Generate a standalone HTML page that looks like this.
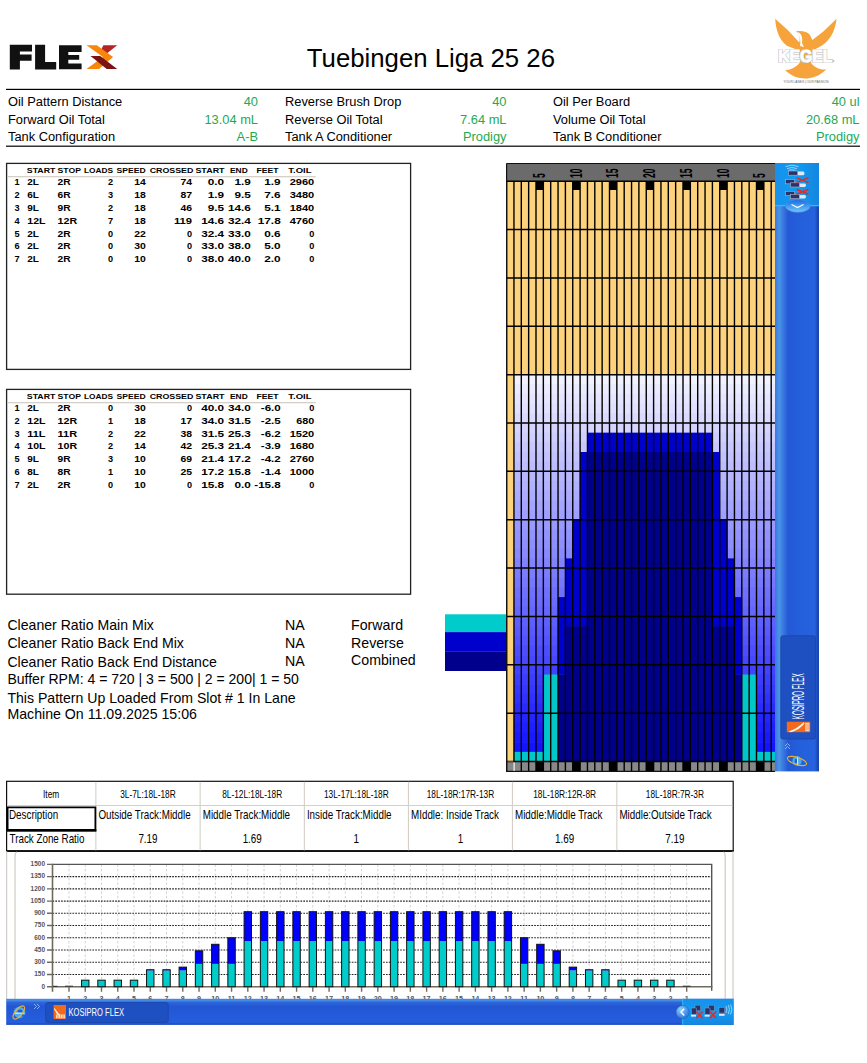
<!DOCTYPE html><html><head><meta charset="utf-8"><title>Kegel Flex Pattern</title><style>html,body{margin:0;padding:0;background:#fff;overflow:hidden}svg{display:block;font-family:"Liberation Sans",sans-serif}</style></head><body>
<svg width="867" height="1063" viewBox="0 0 867 1063">
<g fill="#111">
<path d="M9.8 44.8H32V51.4H19.9V54.5H31.6V60.8H19.9V69.4H9.8Z"/>
<path d="M35.1 44.8H45.1V62.1H56.2V69.4H35.1Z"/>
<path d="M59 45.2H81.6V52.1H68.3V54.9H79.2V59.8H68.3V63.4H81.6V69.3H59Z"/>
</g>
<path d="M103.4 45.2H117.2L107.5 53H99.5Z" fill="#B52424"/>
<path d="M86.5 45.2H96.8L113.1 57L99 69.1H86.5L103 57Z" fill="#F7860C"/>
<path d="M90.5 56.1H100.2L117.2 69.1H106.7Z" fill="#7A1414"/>
<text x="306.80" y="67.00" font-size="26.6" textLength="248.20" lengthAdjust="spacingAndGlyphs" >Tuebingen Liga 25 26</text>
<path fill="#F5A33A" d="M775.2 18.8 C775.6 29.6 779.5 40.8 787.3 46.0 L798.5 50.3 L800.3 62.0 C796.0 67.6 789.9 70.2 785.1 70.2 C791.6 76.3 798.5 78.4 805.0 78.4 C811.5 78.4 819.3 76.3 826.2 69.4 C821.0 70.2 813.3 67.6 810.7 62.0 L812.4 50.3 C823.6 46.0 834.0 39.1 836.6 18.8 L823.6 31.3 L812.4 40.0 L809.8 34.8 C807.2 31.3 801.1 30.4 796.0 31.3 C799.4 33.9 800.3 36.5 799.4 42.5 L788.2 30.4 Z"/>
<path fill="#fff" d="M797.5 32C801 33 803 37 802 43L804 47L800 46C801 41 800 36 797.5 32Z"/>
<text x="805.30" y="62.00" font-size="16.5" text-anchor="middle" font-weight="bold" fill="#fff" textLength="54.00" lengthAdjust="spacingAndGlyphs" stroke="#c4c4c4" stroke-width="2.2">KEGEL</text>
<text x="805.30" y="62.00" font-size="16.5" text-anchor="middle" font-weight="bold" fill="#fff" textLength="54.00" lengthAdjust="spacingAndGlyphs" stroke="#fff" stroke-width="0.9">KEGEL</text>
<circle cx="833.5" cy="61" r="1" fill="#bbb"/>
<text x="806.00" y="82.80" font-size="3.6" text-anchor="middle" fill="#666" textLength="45.00" lengthAdjust="spacingAndGlyphs" >YOUR LANES | OUR PASSION</text>
<rect x="6" y="88.8" width="854" height="1.2" fill="#000"/>
<rect x="6" y="145.6" width="854" height="1.2" fill="#000"/>
<text x="8.00" y="105.70" font-size="12.85" >Oil Pattern Distance</text>
<text x="258.00" y="105.70" font-size="12.85" text-anchor="end" fill="#1DAA55" >40</text>
<text x="285.00" y="105.70" font-size="12.85" >Reverse Brush Drop</text>
<text x="506.50" y="105.70" font-size="12.85" text-anchor="end" fill="#1DAA55" >40</text>
<text x="553.00" y="105.70" font-size="12.85" >Oil Per Board</text>
<text x="859.50" y="105.70" font-size="12.85" text-anchor="end" fill="#1DAA55" >40 ul</text>
<text x="8.00" y="123.50" font-size="12.85" >Forward Oil Total</text>
<text x="258.00" y="123.50" font-size="12.85" text-anchor="end" fill="#1DAA55" >13.04 mL</text>
<text x="285.00" y="123.50" font-size="12.85" >Reverse Oil Total</text>
<text x="506.50" y="123.50" font-size="12.85" text-anchor="end" fill="#1DAA55" >7.64 mL</text>
<text x="553.00" y="123.50" font-size="12.85" >Volume Oil Total</text>
<text x="859.50" y="123.50" font-size="12.85" text-anchor="end" fill="#1DAA55" >20.68 mL</text>
<text x="8.00" y="141.30" font-size="12.85" >Tank Configuration</text>
<text x="258.00" y="141.30" font-size="12.85" text-anchor="end" fill="#1DAA55" >A-B</text>
<text x="285.00" y="141.30" font-size="12.85" >Tank A Conditioner</text>
<text x="506.50" y="141.30" font-size="12.85" text-anchor="end" fill="#1DAA55" >Prodigy</text>
<text x="553.00" y="141.30" font-size="12.85" >Tank B Conditioner</text>
<text x="859.50" y="141.30" font-size="12.85" text-anchor="end" fill="#1DAA55" >Prodigy</text>
<rect x="6.6" y="163.4" width="404" height="206.0" fill="#fff" stroke="#222" stroke-width="1.3"/>
<rect x="7.3" y="176.0" width="308.5" height="1.3" fill="#D4D0C8"/>
<text x="26.80" y="172.90" font-size="6.6" font-weight="bold" textLength="28.60" lengthAdjust="spacingAndGlyphs" >START</text>
<text x="57.60" y="172.90" font-size="6.6" font-weight="bold" textLength="23.40" lengthAdjust="spacingAndGlyphs" >STOP</text>
<text x="84.00" y="172.90" font-size="6.6" font-weight="bold" textLength="29.00" lengthAdjust="spacingAndGlyphs" >LOADS</text>
<text x="116.60" y="172.90" font-size="6.6" font-weight="bold" textLength="29.20" lengthAdjust="spacingAndGlyphs" >SPEED</text>
<text x="149.70" y="172.90" font-size="6.6" font-weight="bold" textLength="43.70" lengthAdjust="spacingAndGlyphs" >CROSSED</text>
<text x="195.40" y="172.90" font-size="6.6" font-weight="bold" textLength="29.20" lengthAdjust="spacingAndGlyphs" >START</text>
<text x="230.00" y="172.90" font-size="6.6" font-weight="bold" textLength="17.70" lengthAdjust="spacingAndGlyphs" >END</text>
<text x="256.60" y="172.90" font-size="6.6" font-weight="bold" textLength="22.00" lengthAdjust="spacingAndGlyphs" >FEET</text>
<text x="288.30" y="172.90" font-size="6.6" font-weight="bold" textLength="23.20" lengthAdjust="spacingAndGlyphs" >T.OIL</text>
<text x="14.40" y="185.20" font-size="8.4" font-weight="bold" textLength="5.10" lengthAdjust="spacingAndGlyphs" >1</text>
<text x="27.30" y="185.20" font-size="8.4" font-weight="bold" textLength="11.70" lengthAdjust="spacingAndGlyphs" >2L</text>
<text x="57.60" y="185.20" font-size="8.4" font-weight="bold" textLength="13.10" lengthAdjust="spacingAndGlyphs" >2R</text>
<text x="113.00" y="185.20" font-size="8.4" text-anchor="end" font-weight="bold" textLength="5.10" lengthAdjust="spacingAndGlyphs" >2</text>
<text x="145.80" y="185.20" font-size="8.4" text-anchor="end" font-weight="bold" textLength="11.60" lengthAdjust="spacingAndGlyphs" >14</text>
<text x="192.10" y="185.20" font-size="8.4" text-anchor="end" font-weight="bold" textLength="11.60" lengthAdjust="spacingAndGlyphs" >74</text>
<text x="224.10" y="185.20" font-size="8.4" text-anchor="end" font-weight="bold" textLength="16.40" lengthAdjust="spacingAndGlyphs" >0.0</text>
<text x="250.80" y="185.20" font-size="8.4" text-anchor="end" font-weight="bold" textLength="16.40" lengthAdjust="spacingAndGlyphs" >1.9</text>
<text x="280.70" y="185.20" font-size="8.4" text-anchor="end" font-weight="bold" textLength="16.40" lengthAdjust="spacingAndGlyphs" >1.9</text>
<text x="314.30" y="185.20" font-size="8.4" text-anchor="end" font-weight="bold" textLength="24.60" lengthAdjust="spacingAndGlyphs" >2960</text>
<text x="14.40" y="198.05" font-size="8.4" font-weight="bold" textLength="5.10" lengthAdjust="spacingAndGlyphs" >2</text>
<text x="27.30" y="198.05" font-size="8.4" font-weight="bold" textLength="11.70" lengthAdjust="spacingAndGlyphs" >6L</text>
<text x="57.60" y="198.05" font-size="8.4" font-weight="bold" textLength="13.10" lengthAdjust="spacingAndGlyphs" >6R</text>
<text x="113.00" y="198.05" font-size="8.4" text-anchor="end" font-weight="bold" textLength="5.10" lengthAdjust="spacingAndGlyphs" >3</text>
<text x="145.80" y="198.05" font-size="8.4" text-anchor="end" font-weight="bold" textLength="11.60" lengthAdjust="spacingAndGlyphs" >18</text>
<text x="192.10" y="198.05" font-size="8.4" text-anchor="end" font-weight="bold" textLength="11.60" lengthAdjust="spacingAndGlyphs" >87</text>
<text x="224.10" y="198.05" font-size="8.4" text-anchor="end" font-weight="bold" textLength="16.40" lengthAdjust="spacingAndGlyphs" >1.9</text>
<text x="250.80" y="198.05" font-size="8.4" text-anchor="end" font-weight="bold" textLength="16.40" lengthAdjust="spacingAndGlyphs" >9.5</text>
<text x="280.70" y="198.05" font-size="8.4" text-anchor="end" font-weight="bold" textLength="16.40" lengthAdjust="spacingAndGlyphs" >7.6</text>
<text x="314.30" y="198.05" font-size="8.4" text-anchor="end" font-weight="bold" textLength="24.60" lengthAdjust="spacingAndGlyphs" >3480</text>
<text x="14.40" y="210.90" font-size="8.4" font-weight="bold" textLength="5.10" lengthAdjust="spacingAndGlyphs" >3</text>
<text x="27.30" y="210.90" font-size="8.4" font-weight="bold" textLength="11.70" lengthAdjust="spacingAndGlyphs" >9L</text>
<text x="57.60" y="210.90" font-size="8.4" font-weight="bold" textLength="13.10" lengthAdjust="spacingAndGlyphs" >9R</text>
<text x="113.00" y="210.90" font-size="8.4" text-anchor="end" font-weight="bold" textLength="5.10" lengthAdjust="spacingAndGlyphs" >2</text>
<text x="145.80" y="210.90" font-size="8.4" text-anchor="end" font-weight="bold" textLength="11.60" lengthAdjust="spacingAndGlyphs" >18</text>
<text x="192.10" y="210.90" font-size="8.4" text-anchor="end" font-weight="bold" textLength="11.60" lengthAdjust="spacingAndGlyphs" >46</text>
<text x="224.10" y="210.90" font-size="8.4" text-anchor="end" font-weight="bold" textLength="16.40" lengthAdjust="spacingAndGlyphs" >9.5</text>
<text x="250.80" y="210.90" font-size="8.4" text-anchor="end" font-weight="bold" textLength="22.90" lengthAdjust="spacingAndGlyphs" >14.6</text>
<text x="280.70" y="210.90" font-size="8.4" text-anchor="end" font-weight="bold" textLength="16.40" lengthAdjust="spacingAndGlyphs" >5.1</text>
<text x="314.30" y="210.90" font-size="8.4" text-anchor="end" font-weight="bold" textLength="24.60" lengthAdjust="spacingAndGlyphs" >1840</text>
<text x="14.40" y="223.75" font-size="8.4" font-weight="bold" textLength="5.10" lengthAdjust="spacingAndGlyphs" >4</text>
<text x="27.30" y="223.75" font-size="8.4" font-weight="bold" textLength="18.20" lengthAdjust="spacingAndGlyphs" >12L</text>
<text x="57.60" y="223.75" font-size="8.4" font-weight="bold" textLength="19.60" lengthAdjust="spacingAndGlyphs" >12R</text>
<text x="113.00" y="223.75" font-size="8.4" text-anchor="end" font-weight="bold" textLength="5.10" lengthAdjust="spacingAndGlyphs" >7</text>
<text x="145.80" y="223.75" font-size="8.4" text-anchor="end" font-weight="bold" textLength="11.60" lengthAdjust="spacingAndGlyphs" >18</text>
<text x="192.10" y="223.75" font-size="8.4" text-anchor="end" font-weight="bold" textLength="18.10" lengthAdjust="spacingAndGlyphs" >119</text>
<text x="224.10" y="223.75" font-size="8.4" text-anchor="end" font-weight="bold" textLength="22.90" lengthAdjust="spacingAndGlyphs" >14.6</text>
<text x="250.80" y="223.75" font-size="8.4" text-anchor="end" font-weight="bold" textLength="22.90" lengthAdjust="spacingAndGlyphs" >32.4</text>
<text x="280.70" y="223.75" font-size="8.4" text-anchor="end" font-weight="bold" textLength="22.90" lengthAdjust="spacingAndGlyphs" >17.8</text>
<text x="314.30" y="223.75" font-size="8.4" text-anchor="end" font-weight="bold" textLength="24.60" lengthAdjust="spacingAndGlyphs" >4760</text>
<text x="14.40" y="236.60" font-size="8.4" font-weight="bold" textLength="5.10" lengthAdjust="spacingAndGlyphs" >5</text>
<text x="27.30" y="236.60" font-size="8.4" font-weight="bold" textLength="11.70" lengthAdjust="spacingAndGlyphs" >2L</text>
<text x="57.60" y="236.60" font-size="8.4" font-weight="bold" textLength="13.10" lengthAdjust="spacingAndGlyphs" >2R</text>
<text x="113.00" y="236.60" font-size="8.4" text-anchor="end" font-weight="bold" textLength="5.10" lengthAdjust="spacingAndGlyphs" >0</text>
<text x="145.80" y="236.60" font-size="8.4" text-anchor="end" font-weight="bold" textLength="11.60" lengthAdjust="spacingAndGlyphs" >22</text>
<text x="192.10" y="236.60" font-size="8.4" text-anchor="end" font-weight="bold" textLength="5.10" lengthAdjust="spacingAndGlyphs" >0</text>
<text x="224.10" y="236.60" font-size="8.4" text-anchor="end" font-weight="bold" textLength="22.90" lengthAdjust="spacingAndGlyphs" >32.4</text>
<text x="250.80" y="236.60" font-size="8.4" text-anchor="end" font-weight="bold" textLength="22.90" lengthAdjust="spacingAndGlyphs" >33.0</text>
<text x="280.70" y="236.60" font-size="8.4" text-anchor="end" font-weight="bold" textLength="16.40" lengthAdjust="spacingAndGlyphs" >0.6</text>
<text x="314.30" y="236.60" font-size="8.4" text-anchor="end" font-weight="bold" textLength="5.10" lengthAdjust="spacingAndGlyphs" >0</text>
<text x="14.40" y="249.45" font-size="8.4" font-weight="bold" textLength="5.10" lengthAdjust="spacingAndGlyphs" >6</text>
<text x="27.30" y="249.45" font-size="8.4" font-weight="bold" textLength="11.70" lengthAdjust="spacingAndGlyphs" >2L</text>
<text x="57.60" y="249.45" font-size="8.4" font-weight="bold" textLength="13.10" lengthAdjust="spacingAndGlyphs" >2R</text>
<text x="113.00" y="249.45" font-size="8.4" text-anchor="end" font-weight="bold" textLength="5.10" lengthAdjust="spacingAndGlyphs" >0</text>
<text x="145.80" y="249.45" font-size="8.4" text-anchor="end" font-weight="bold" textLength="11.60" lengthAdjust="spacingAndGlyphs" >30</text>
<text x="192.10" y="249.45" font-size="8.4" text-anchor="end" font-weight="bold" textLength="5.10" lengthAdjust="spacingAndGlyphs" >0</text>
<text x="224.10" y="249.45" font-size="8.4" text-anchor="end" font-weight="bold" textLength="22.90" lengthAdjust="spacingAndGlyphs" >33.0</text>
<text x="250.80" y="249.45" font-size="8.4" text-anchor="end" font-weight="bold" textLength="22.90" lengthAdjust="spacingAndGlyphs" >38.0</text>
<text x="280.70" y="249.45" font-size="8.4" text-anchor="end" font-weight="bold" textLength="16.40" lengthAdjust="spacingAndGlyphs" >5.0</text>
<text x="314.30" y="249.45" font-size="8.4" text-anchor="end" font-weight="bold" textLength="5.10" lengthAdjust="spacingAndGlyphs" >0</text>
<text x="14.40" y="262.30" font-size="8.4" font-weight="bold" textLength="5.10" lengthAdjust="spacingAndGlyphs" >7</text>
<text x="27.30" y="262.30" font-size="8.4" font-weight="bold" textLength="11.70" lengthAdjust="spacingAndGlyphs" >2L</text>
<text x="57.60" y="262.30" font-size="8.4" font-weight="bold" textLength="13.10" lengthAdjust="spacingAndGlyphs" >2R</text>
<text x="113.00" y="262.30" font-size="8.4" text-anchor="end" font-weight="bold" textLength="5.10" lengthAdjust="spacingAndGlyphs" >0</text>
<text x="145.80" y="262.30" font-size="8.4" text-anchor="end" font-weight="bold" textLength="11.60" lengthAdjust="spacingAndGlyphs" >10</text>
<text x="192.10" y="262.30" font-size="8.4" text-anchor="end" font-weight="bold" textLength="5.10" lengthAdjust="spacingAndGlyphs" >0</text>
<text x="224.10" y="262.30" font-size="8.4" text-anchor="end" font-weight="bold" textLength="22.90" lengthAdjust="spacingAndGlyphs" >38.0</text>
<text x="250.80" y="262.30" font-size="8.4" text-anchor="end" font-weight="bold" textLength="22.90" lengthAdjust="spacingAndGlyphs" >40.0</text>
<text x="280.70" y="262.30" font-size="8.4" text-anchor="end" font-weight="bold" textLength="16.40" lengthAdjust="spacingAndGlyphs" >2.0</text>
<text x="314.30" y="262.30" font-size="8.4" text-anchor="end" font-weight="bold" textLength="5.10" lengthAdjust="spacingAndGlyphs" >0</text>
<rect x="6.6" y="389.4" width="404" height="204.8" fill="#fff" stroke="#222" stroke-width="1.3"/>
<rect x="7.3" y="402.0" width="308.5" height="1.3" fill="#D4D0C8"/>
<text x="26.80" y="398.90" font-size="6.6" font-weight="bold" textLength="28.60" lengthAdjust="spacingAndGlyphs" >START</text>
<text x="57.60" y="398.90" font-size="6.6" font-weight="bold" textLength="23.40" lengthAdjust="spacingAndGlyphs" >STOP</text>
<text x="84.00" y="398.90" font-size="6.6" font-weight="bold" textLength="29.00" lengthAdjust="spacingAndGlyphs" >LOADS</text>
<text x="116.60" y="398.90" font-size="6.6" font-weight="bold" textLength="29.20" lengthAdjust="spacingAndGlyphs" >SPEED</text>
<text x="149.70" y="398.90" font-size="6.6" font-weight="bold" textLength="43.70" lengthAdjust="spacingAndGlyphs" >CROSSED</text>
<text x="195.40" y="398.90" font-size="6.6" font-weight="bold" textLength="29.20" lengthAdjust="spacingAndGlyphs" >START</text>
<text x="230.00" y="398.90" font-size="6.6" font-weight="bold" textLength="17.70" lengthAdjust="spacingAndGlyphs" >END</text>
<text x="256.60" y="398.90" font-size="6.6" font-weight="bold" textLength="22.00" lengthAdjust="spacingAndGlyphs" >FEET</text>
<text x="288.30" y="398.90" font-size="6.6" font-weight="bold" textLength="23.20" lengthAdjust="spacingAndGlyphs" >T.OIL</text>
<text x="14.40" y="411.00" font-size="8.4" font-weight="bold" textLength="5.10" lengthAdjust="spacingAndGlyphs" >1</text>
<text x="27.30" y="411.00" font-size="8.4" font-weight="bold" textLength="11.70" lengthAdjust="spacingAndGlyphs" >2L</text>
<text x="57.60" y="411.00" font-size="8.4" font-weight="bold" textLength="13.10" lengthAdjust="spacingAndGlyphs" >2R</text>
<text x="113.00" y="411.00" font-size="8.4" text-anchor="end" font-weight="bold" textLength="5.10" lengthAdjust="spacingAndGlyphs" >0</text>
<text x="145.80" y="411.00" font-size="8.4" text-anchor="end" font-weight="bold" textLength="11.60" lengthAdjust="spacingAndGlyphs" >30</text>
<text x="192.10" y="411.00" font-size="8.4" text-anchor="end" font-weight="bold" textLength="5.10" lengthAdjust="spacingAndGlyphs" >0</text>
<text x="224.10" y="411.00" font-size="8.4" text-anchor="end" font-weight="bold" textLength="22.90" lengthAdjust="spacingAndGlyphs" >40.0</text>
<text x="250.80" y="411.00" font-size="8.4" text-anchor="end" font-weight="bold" textLength="22.90" lengthAdjust="spacingAndGlyphs" >34.0</text>
<text x="280.70" y="411.00" font-size="8.4" text-anchor="end" font-weight="bold" textLength="19.90" lengthAdjust="spacingAndGlyphs" >-6.0</text>
<text x="314.30" y="411.00" font-size="8.4" text-anchor="end" font-weight="bold" textLength="5.10" lengthAdjust="spacingAndGlyphs" >0</text>
<text x="14.40" y="423.80" font-size="8.4" font-weight="bold" textLength="5.10" lengthAdjust="spacingAndGlyphs" >2</text>
<text x="27.30" y="423.80" font-size="8.4" font-weight="bold" textLength="18.20" lengthAdjust="spacingAndGlyphs" >12L</text>
<text x="57.60" y="423.80" font-size="8.4" font-weight="bold" textLength="19.60" lengthAdjust="spacingAndGlyphs" >12R</text>
<text x="113.00" y="423.80" font-size="8.4" text-anchor="end" font-weight="bold" textLength="5.10" lengthAdjust="spacingAndGlyphs" >1</text>
<text x="145.80" y="423.80" font-size="8.4" text-anchor="end" font-weight="bold" textLength="11.60" lengthAdjust="spacingAndGlyphs" >18</text>
<text x="192.10" y="423.80" font-size="8.4" text-anchor="end" font-weight="bold" textLength="11.60" lengthAdjust="spacingAndGlyphs" >17</text>
<text x="224.10" y="423.80" font-size="8.4" text-anchor="end" font-weight="bold" textLength="22.90" lengthAdjust="spacingAndGlyphs" >34.0</text>
<text x="250.80" y="423.80" font-size="8.4" text-anchor="end" font-weight="bold" textLength="22.90" lengthAdjust="spacingAndGlyphs" >31.5</text>
<text x="280.70" y="423.80" font-size="8.4" text-anchor="end" font-weight="bold" textLength="19.90" lengthAdjust="spacingAndGlyphs" >-2.5</text>
<text x="314.30" y="423.80" font-size="8.4" text-anchor="end" font-weight="bold" textLength="18.10" lengthAdjust="spacingAndGlyphs" >680</text>
<text x="14.40" y="436.60" font-size="8.4" font-weight="bold" textLength="5.10" lengthAdjust="spacingAndGlyphs" >3</text>
<text x="27.30" y="436.60" font-size="8.4" font-weight="bold" textLength="18.20" lengthAdjust="spacingAndGlyphs" >11L</text>
<text x="57.60" y="436.60" font-size="8.4" font-weight="bold" textLength="19.60" lengthAdjust="spacingAndGlyphs" >11R</text>
<text x="113.00" y="436.60" font-size="8.4" text-anchor="end" font-weight="bold" textLength="5.10" lengthAdjust="spacingAndGlyphs" >2</text>
<text x="145.80" y="436.60" font-size="8.4" text-anchor="end" font-weight="bold" textLength="11.60" lengthAdjust="spacingAndGlyphs" >22</text>
<text x="192.10" y="436.60" font-size="8.4" text-anchor="end" font-weight="bold" textLength="11.60" lengthAdjust="spacingAndGlyphs" >38</text>
<text x="224.10" y="436.60" font-size="8.4" text-anchor="end" font-weight="bold" textLength="22.90" lengthAdjust="spacingAndGlyphs" >31.5</text>
<text x="250.80" y="436.60" font-size="8.4" text-anchor="end" font-weight="bold" textLength="22.90" lengthAdjust="spacingAndGlyphs" >25.3</text>
<text x="280.70" y="436.60" font-size="8.4" text-anchor="end" font-weight="bold" textLength="19.90" lengthAdjust="spacingAndGlyphs" >-6.2</text>
<text x="314.30" y="436.60" font-size="8.4" text-anchor="end" font-weight="bold" textLength="24.60" lengthAdjust="spacingAndGlyphs" >1520</text>
<text x="14.40" y="449.40" font-size="8.4" font-weight="bold" textLength="5.10" lengthAdjust="spacingAndGlyphs" >4</text>
<text x="27.30" y="449.40" font-size="8.4" font-weight="bold" textLength="18.20" lengthAdjust="spacingAndGlyphs" >10L</text>
<text x="57.60" y="449.40" font-size="8.4" font-weight="bold" textLength="19.60" lengthAdjust="spacingAndGlyphs" >10R</text>
<text x="113.00" y="449.40" font-size="8.4" text-anchor="end" font-weight="bold" textLength="5.10" lengthAdjust="spacingAndGlyphs" >2</text>
<text x="145.80" y="449.40" font-size="8.4" text-anchor="end" font-weight="bold" textLength="11.60" lengthAdjust="spacingAndGlyphs" >14</text>
<text x="192.10" y="449.40" font-size="8.4" text-anchor="end" font-weight="bold" textLength="11.60" lengthAdjust="spacingAndGlyphs" >42</text>
<text x="224.10" y="449.40" font-size="8.4" text-anchor="end" font-weight="bold" textLength="22.90" lengthAdjust="spacingAndGlyphs" >25.3</text>
<text x="250.80" y="449.40" font-size="8.4" text-anchor="end" font-weight="bold" textLength="22.90" lengthAdjust="spacingAndGlyphs" >21.4</text>
<text x="280.70" y="449.40" font-size="8.4" text-anchor="end" font-weight="bold" textLength="19.90" lengthAdjust="spacingAndGlyphs" >-3.9</text>
<text x="314.30" y="449.40" font-size="8.4" text-anchor="end" font-weight="bold" textLength="24.60" lengthAdjust="spacingAndGlyphs" >1680</text>
<text x="14.40" y="462.20" font-size="8.4" font-weight="bold" textLength="5.10" lengthAdjust="spacingAndGlyphs" >5</text>
<text x="27.30" y="462.20" font-size="8.4" font-weight="bold" textLength="11.70" lengthAdjust="spacingAndGlyphs" >9L</text>
<text x="57.60" y="462.20" font-size="8.4" font-weight="bold" textLength="13.10" lengthAdjust="spacingAndGlyphs" >9R</text>
<text x="113.00" y="462.20" font-size="8.4" text-anchor="end" font-weight="bold" textLength="5.10" lengthAdjust="spacingAndGlyphs" >3</text>
<text x="145.80" y="462.20" font-size="8.4" text-anchor="end" font-weight="bold" textLength="11.60" lengthAdjust="spacingAndGlyphs" >10</text>
<text x="192.10" y="462.20" font-size="8.4" text-anchor="end" font-weight="bold" textLength="11.60" lengthAdjust="spacingAndGlyphs" >69</text>
<text x="224.10" y="462.20" font-size="8.4" text-anchor="end" font-weight="bold" textLength="22.90" lengthAdjust="spacingAndGlyphs" >21.4</text>
<text x="250.80" y="462.20" font-size="8.4" text-anchor="end" font-weight="bold" textLength="22.90" lengthAdjust="spacingAndGlyphs" >17.2</text>
<text x="280.70" y="462.20" font-size="8.4" text-anchor="end" font-weight="bold" textLength="19.90" lengthAdjust="spacingAndGlyphs" >-4.2</text>
<text x="314.30" y="462.20" font-size="8.4" text-anchor="end" font-weight="bold" textLength="24.60" lengthAdjust="spacingAndGlyphs" >2760</text>
<text x="14.40" y="475.00" font-size="8.4" font-weight="bold" textLength="5.10" lengthAdjust="spacingAndGlyphs" >6</text>
<text x="27.30" y="475.00" font-size="8.4" font-weight="bold" textLength="11.70" lengthAdjust="spacingAndGlyphs" >8L</text>
<text x="57.60" y="475.00" font-size="8.4" font-weight="bold" textLength="13.10" lengthAdjust="spacingAndGlyphs" >8R</text>
<text x="113.00" y="475.00" font-size="8.4" text-anchor="end" font-weight="bold" textLength="5.10" lengthAdjust="spacingAndGlyphs" >1</text>
<text x="145.80" y="475.00" font-size="8.4" text-anchor="end" font-weight="bold" textLength="11.60" lengthAdjust="spacingAndGlyphs" >10</text>
<text x="192.10" y="475.00" font-size="8.4" text-anchor="end" font-weight="bold" textLength="11.60" lengthAdjust="spacingAndGlyphs" >25</text>
<text x="224.10" y="475.00" font-size="8.4" text-anchor="end" font-weight="bold" textLength="22.90" lengthAdjust="spacingAndGlyphs" >17.2</text>
<text x="250.80" y="475.00" font-size="8.4" text-anchor="end" font-weight="bold" textLength="22.90" lengthAdjust="spacingAndGlyphs" >15.8</text>
<text x="280.70" y="475.00" font-size="8.4" text-anchor="end" font-weight="bold" textLength="19.90" lengthAdjust="spacingAndGlyphs" >-1.4</text>
<text x="314.30" y="475.00" font-size="8.4" text-anchor="end" font-weight="bold" textLength="24.60" lengthAdjust="spacingAndGlyphs" >1000</text>
<text x="14.40" y="487.80" font-size="8.4" font-weight="bold" textLength="5.10" lengthAdjust="spacingAndGlyphs" >7</text>
<text x="27.30" y="487.80" font-size="8.4" font-weight="bold" textLength="11.70" lengthAdjust="spacingAndGlyphs" >2L</text>
<text x="57.60" y="487.80" font-size="8.4" font-weight="bold" textLength="13.10" lengthAdjust="spacingAndGlyphs" >2R</text>
<text x="113.00" y="487.80" font-size="8.4" text-anchor="end" font-weight="bold" textLength="5.10" lengthAdjust="spacingAndGlyphs" >0</text>
<text x="145.80" y="487.80" font-size="8.4" text-anchor="end" font-weight="bold" textLength="11.60" lengthAdjust="spacingAndGlyphs" >10</text>
<text x="192.10" y="487.80" font-size="8.4" text-anchor="end" font-weight="bold" textLength="5.10" lengthAdjust="spacingAndGlyphs" >0</text>
<text x="224.10" y="487.80" font-size="8.4" text-anchor="end" font-weight="bold" textLength="22.90" lengthAdjust="spacingAndGlyphs" >15.8</text>
<text x="250.80" y="487.80" font-size="8.4" text-anchor="end" font-weight="bold" textLength="16.40" lengthAdjust="spacingAndGlyphs" >0.0</text>
<text x="280.70" y="487.80" font-size="8.4" text-anchor="end" font-weight="bold" textLength="26.40" lengthAdjust="spacingAndGlyphs" >-15.8</text>
<text x="314.30" y="487.80" font-size="8.4" text-anchor="end" font-weight="bold" textLength="5.10" lengthAdjust="spacingAndGlyphs" >0</text>
<text x="7.40" y="629.80" font-size="14.2" textLength="146.50" lengthAdjust="spacingAndGlyphs" >Cleaner Ratio Main Mix</text>
<text x="7.40" y="648.10" font-size="14.2" textLength="176.50" lengthAdjust="spacingAndGlyphs" >Cleaner Ratio Back End Mix</text>
<text x="7.40" y="667.10" font-size="14.2" textLength="209.50" lengthAdjust="spacingAndGlyphs" >Cleaner Ratio Back End Distance</text>
<text x="7.40" y="683.60" font-size="14.2" textLength="291.50" lengthAdjust="spacingAndGlyphs" >Buffer RPM: 4 = 720 | 3 = 500 | 2 = 200| 1 = 50</text>
<text x="7.40" y="702.60" font-size="14.2" textLength="288.20" lengthAdjust="spacingAndGlyphs" >This Pattern Up Loaded From Slot # 1 In Lane</text>
<text x="7.40" y="718.60" font-size="14.2" textLength="189.50" lengthAdjust="spacingAndGlyphs" >Machine On 11.09.2025 15:06</text>
<text x="285.00" y="629.80" font-size="14.2" >NA</text>
<text x="351.00" y="629.80" font-size="14.2" >Forward</text>
<text x="285.00" y="647.90" font-size="14.2" >NA</text>
<text x="351.00" y="647.60" font-size="14.2" >Reverse</text>
<text x="285.00" y="665.60" font-size="14.2" >NA</text>
<text x="351.00" y="665.40" font-size="14.2" >Combined</text>
<rect x="445" y="614.3" width="62" height="17.8" fill="#00CCCC"/>
<rect x="445" y="632.1" width="62" height="19.1" fill="#0000CC"/>
<rect x="445" y="651.2" width="62" height="19.8" fill="#00008C"/>
<defs><clipPath id="lg"><rect x="506" y="163" width="269" height="609"/></clipPath></defs>
<g clip-path="url(#lg)">
<rect x="506.6" y="163.4" width="270" height="17.8" fill="#6B6B6B"/>
<rect x="506.6" y="181" width="270" height="193.62" fill="#FCD27C"/>
<rect x="513.95" y="374.62" width="271.95" height="10.27" fill="rgb(241,241,255)"/>
<rect x="513.95" y="384.29" width="271.95" height="10.27" fill="rgb(235,235,255)"/>
<rect x="513.95" y="393.96" width="271.95" height="10.27" fill="rgb(229,229,255)"/>
<rect x="513.95" y="403.64" width="271.95" height="10.27" fill="rgb(224,224,255)"/>
<rect x="513.95" y="413.31" width="271.95" height="10.27" fill="rgb(218,218,255)"/>
<rect x="513.95" y="422.98" width="271.95" height="10.27" fill="rgb(212,212,255)"/>
<rect x="513.95" y="432.65" width="271.95" height="10.27" fill="rgb(206,206,255)"/>
<rect x="513.95" y="442.32" width="271.95" height="10.27" fill="rgb(200,200,255)"/>
<rect x="513.95" y="452.00" width="271.95" height="10.27" fill="rgb(194,194,255)"/>
<rect x="513.95" y="461.67" width="271.95" height="10.27" fill="rgb(188,188,255)"/>
<rect x="513.95" y="471.34" width="271.95" height="10.27" fill="rgb(183,183,255)"/>
<rect x="513.95" y="481.01" width="271.95" height="10.27" fill="rgb(177,177,255)"/>
<rect x="513.95" y="490.68" width="271.95" height="10.27" fill="rgb(171,171,255)"/>
<rect x="513.95" y="500.36" width="271.95" height="10.27" fill="rgb(165,165,255)"/>
<rect x="513.95" y="510.03" width="271.95" height="10.27" fill="rgb(159,159,255)"/>
<rect x="513.95" y="519.70" width="271.95" height="10.27" fill="rgb(153,153,255)"/>
<rect x="513.95" y="529.37" width="271.95" height="10.27" fill="rgb(147,147,255)"/>
<rect x="513.95" y="539.04" width="271.95" height="10.27" fill="rgb(142,142,255)"/>
<rect x="513.95" y="548.72" width="271.95" height="10.27" fill="rgb(136,136,255)"/>
<rect x="513.95" y="558.39" width="271.95" height="10.27" fill="rgb(130,130,255)"/>
<rect x="513.95" y="568.06" width="271.95" height="10.27" fill="rgb(124,124,255)"/>
<rect x="513.95" y="577.73" width="271.95" height="10.27" fill="rgb(118,118,255)"/>
<rect x="513.95" y="587.40" width="271.95" height="10.27" fill="rgb(112,112,255)"/>
<rect x="513.95" y="597.08" width="271.95" height="10.27" fill="rgb(107,107,255)"/>
<rect x="513.95" y="606.75" width="271.95" height="10.27" fill="rgb(101,101,255)"/>
<rect x="513.95" y="616.42" width="271.95" height="10.27" fill="rgb(95,95,255)"/>
<rect x="513.95" y="626.09" width="271.95" height="10.27" fill="rgb(89,89,255)"/>
<rect x="513.95" y="635.76" width="271.95" height="10.27" fill="rgb(83,83,255)"/>
<rect x="513.95" y="645.44" width="271.95" height="10.27" fill="rgb(77,77,255)"/>
<rect x="513.95" y="655.11" width="271.95" height="10.27" fill="rgb(71,71,255)"/>
<rect x="513.95" y="664.78" width="271.95" height="10.27" fill="rgb(66,66,255)"/>
<rect x="513.95" y="674.45" width="271.95" height="10.27" fill="rgb(60,60,255)"/>
<rect x="513.95" y="684.12" width="271.95" height="10.27" fill="rgb(54,54,255)"/>
<rect x="513.95" y="693.80" width="271.95" height="10.27" fill="rgb(48,48,255)"/>
<rect x="513.95" y="703.47" width="271.95" height="10.27" fill="rgb(42,42,255)"/>
<rect x="513.95" y="713.14" width="271.95" height="10.27" fill="rgb(36,36,255)"/>
<rect x="513.95" y="722.81" width="271.95" height="10.27" fill="rgb(30,30,255)"/>
<rect x="513.95" y="732.48" width="271.95" height="10.27" fill="rgb(25,25,255)"/>
<rect x="513.95" y="742.16" width="271.95" height="10.27" fill="rgb(19,19,255)"/>
<rect x="513.95" y="751.83" width="271.95" height="10.27" fill="rgb(13,13,255)"/>
<rect x="506.60" y="181" width="7.35" height="580.50" fill="#FCD27C"/>
<rect x="513.95" y="751.83" width="7.35" height="9.67" fill="#00C8C8"/>
<rect x="521.30" y="751.83" width="7.35" height="9.67" fill="#00C8C8"/>
<rect x="528.65" y="751.83" width="7.35" height="9.67" fill="#00C8C8"/>
<rect x="536.00" y="751.83" width="7.35" height="9.67" fill="#00C8C8"/>
<rect x="543.35" y="674.45" width="7.35" height="87.05" fill="#00C8C8"/>
<rect x="550.70" y="674.45" width="7.35" height="87.05" fill="#00C8C8"/>
<rect x="558.05" y="597.08" width="7.35" height="77.38" fill="#0000CC"/>
<rect x="558.05" y="674.45" width="7.35" height="87.05" fill="#00008C"/>
<rect x="565.40" y="558.39" width="7.35" height="67.70" fill="#0000CC"/>
<rect x="565.40" y="626.09" width="7.35" height="135.41" fill="#00008C"/>
<rect x="572.75" y="519.70" width="7.35" height="106.39" fill="#0000CC"/>
<rect x="572.75" y="626.09" width="7.35" height="135.41" fill="#00008C"/>
<rect x="580.10" y="452.00" width="7.35" height="174.10" fill="#0000CC"/>
<rect x="580.10" y="626.09" width="7.35" height="135.41" fill="#00008C"/>
<rect x="587.45" y="432.65" width="7.35" height="19.34" fill="#0000CC"/>
<rect x="587.45" y="452.00" width="7.35" height="309.50" fill="#00008C"/>
<rect x="594.80" y="432.65" width="7.35" height="19.34" fill="#0000CC"/>
<rect x="594.80" y="452.00" width="7.35" height="309.50" fill="#00008C"/>
<rect x="602.15" y="432.65" width="7.35" height="19.34" fill="#0000CC"/>
<rect x="602.15" y="452.00" width="7.35" height="309.50" fill="#00008C"/>
<rect x="609.50" y="432.65" width="7.35" height="19.34" fill="#0000CC"/>
<rect x="609.50" y="452.00" width="7.35" height="309.50" fill="#00008C"/>
<rect x="616.85" y="432.65" width="7.35" height="19.34" fill="#0000CC"/>
<rect x="616.85" y="452.00" width="7.35" height="309.50" fill="#00008C"/>
<rect x="624.20" y="432.65" width="7.35" height="19.34" fill="#0000CC"/>
<rect x="624.20" y="452.00" width="7.35" height="309.50" fill="#00008C"/>
<rect x="631.55" y="432.65" width="7.35" height="19.34" fill="#0000CC"/>
<rect x="631.55" y="452.00" width="7.35" height="309.50" fill="#00008C"/>
<rect x="638.90" y="432.65" width="7.35" height="19.34" fill="#0000CC"/>
<rect x="638.90" y="452.00" width="7.35" height="309.50" fill="#00008C"/>
<rect x="646.25" y="432.65" width="7.35" height="19.34" fill="#0000CC"/>
<rect x="646.25" y="452.00" width="7.35" height="309.50" fill="#00008C"/>
<rect x="653.60" y="432.65" width="7.35" height="19.34" fill="#0000CC"/>
<rect x="653.60" y="452.00" width="7.35" height="309.50" fill="#00008C"/>
<rect x="660.95" y="432.65" width="7.35" height="19.34" fill="#0000CC"/>
<rect x="660.95" y="452.00" width="7.35" height="309.50" fill="#00008C"/>
<rect x="668.30" y="432.65" width="7.35" height="19.34" fill="#0000CC"/>
<rect x="668.30" y="452.00" width="7.35" height="309.50" fill="#00008C"/>
<rect x="675.65" y="432.65" width="7.35" height="19.34" fill="#0000CC"/>
<rect x="675.65" y="452.00" width="7.35" height="309.50" fill="#00008C"/>
<rect x="683.00" y="432.65" width="7.35" height="19.34" fill="#0000CC"/>
<rect x="683.00" y="452.00" width="7.35" height="309.50" fill="#00008C"/>
<rect x="690.35" y="432.65" width="7.35" height="19.34" fill="#0000CC"/>
<rect x="690.35" y="452.00" width="7.35" height="309.50" fill="#00008C"/>
<rect x="697.70" y="432.65" width="7.35" height="19.34" fill="#0000CC"/>
<rect x="697.70" y="452.00" width="7.35" height="309.50" fill="#00008C"/>
<rect x="705.05" y="432.65" width="7.35" height="19.34" fill="#0000CC"/>
<rect x="705.05" y="452.00" width="7.35" height="309.50" fill="#00008C"/>
<rect x="712.40" y="452.00" width="7.35" height="174.10" fill="#0000CC"/>
<rect x="712.40" y="626.09" width="7.35" height="135.41" fill="#00008C"/>
<rect x="719.75" y="519.70" width="7.35" height="106.39" fill="#0000CC"/>
<rect x="719.75" y="626.09" width="7.35" height="135.41" fill="#00008C"/>
<rect x="727.10" y="558.39" width="7.35" height="67.70" fill="#0000CC"/>
<rect x="727.10" y="626.09" width="7.35" height="135.41" fill="#00008C"/>
<rect x="734.45" y="597.08" width="7.35" height="77.38" fill="#0000CC"/>
<rect x="734.45" y="674.45" width="7.35" height="87.05" fill="#00008C"/>
<rect x="741.80" y="674.45" width="7.35" height="87.05" fill="#00C8C8"/>
<rect x="749.15" y="674.45" width="7.35" height="87.05" fill="#00C8C8"/>
<rect x="756.50" y="751.83" width="7.35" height="9.67" fill="#00C8C8"/>
<rect x="763.85" y="751.83" width="7.35" height="9.67" fill="#00C8C8"/>
<rect x="771.20" y="751.83" width="7.35" height="9.67" fill="#00C8C8"/>
<rect x="778.55" y="751.83" width="7.35" height="9.67" fill="#00C8C8"/>
<rect x="536.00" y="181" width="7.35" height="9" fill="#000"/>
<rect x="572.75" y="181" width="7.35" height="9" fill="#000"/>
<rect x="609.50" y="181" width="7.35" height="9" fill="#000"/>
<rect x="646.25" y="181" width="7.35" height="9" fill="#000"/>
<rect x="683.00" y="181" width="7.35" height="9" fill="#000"/>
<rect x="719.75" y="181" width="7.35" height="9" fill="#000"/>
<rect x="756.50" y="181" width="7.35" height="9" fill="#000"/>
<rect x="506.6" y="761.50" width="270" height="9.80" fill="#888"/>
<rect x="536.00" y="761.50" width="7.35" height="9.80" fill="#000"/>
<rect x="572.75" y="761.50" width="7.35" height="9.80" fill="#000"/>
<rect x="609.50" y="761.50" width="7.35" height="9.80" fill="#000"/>
<rect x="646.25" y="761.50" width="7.35" height="9.80" fill="#000"/>
<rect x="683.00" y="761.50" width="7.35" height="9.80" fill="#000"/>
<rect x="719.75" y="761.50" width="7.35" height="9.80" fill="#000"/>
<rect x="756.50" y="761.50" width="7.35" height="9.80" fill="#000"/>
<path d="M506.60 181V771.3 M513.95 181V771.3 M521.30 181V771.3 M528.65 181V771.3 M536.00 181V771.3 M543.35 181V771.3 M550.70 181V771.3 M558.05 181V771.3 M565.40 181V771.3 M572.75 181V771.3 M580.10 181V771.3 M587.45 181V771.3 M594.80 181V771.3 M602.15 181V771.3 M609.50 181V771.3 M616.85 181V771.3 M624.20 181V771.3 M631.55 181V771.3 M638.90 181V771.3 M646.25 181V771.3 M653.60 181V771.3 M660.95 181V771.3 M668.30 181V771.3 M675.65 181V771.3 M683.00 181V771.3 M690.35 181V771.3 M697.70 181V771.3 M705.05 181V771.3 M712.40 181V771.3 M719.75 181V771.3 M727.10 181V771.3 M734.45 181V771.3 M741.80 181V771.3 M749.15 181V771.3 M756.50 181V771.3 M763.85 181V771.3 M771.20 181V771.3 M778.55 181V771.3" stroke="#000" stroke-width="1.4" fill="none"/>
<path d="M506 181.20H776 M506 229.56H776 M506 277.92H776 M506 326.28H776 M506 374.64H776 M506 423.00H776 M506 471.36H776 M506 519.72H776 M506 568.08H776 M506 616.44H776 M506 664.80H776 M506 713.16H776 M506 761.52H776" stroke="#000" stroke-width="1.5" fill="none"/>
<path d="M506.6 163.4H776M506.6 163.4V771.3M506 771.3H776" stroke="#111" stroke-width="1.2" fill="none"/>
<rect x="513.3" y="762.30" width="1.5" height="8.6" fill="#fff"/>
<rect x="507.5" y="761.00" width="6" height="1" fill="#3050A0"/>
<text transform="translate(544.87,178) rotate(-90) scale(0.5,1)" font-size="17" font-weight="bold" fill="#000">5</text>
<text transform="translate(581.62,178) rotate(-90) scale(0.5,1)" font-size="17" font-weight="bold" fill="#000">10</text>
<text transform="translate(618.37,178) rotate(-90) scale(0.5,1)" font-size="17" font-weight="bold" fill="#000">15</text>
<text transform="translate(655.12,178) rotate(-90) scale(0.5,1)" font-size="17" font-weight="bold" fill="#000">20</text>
<text transform="translate(691.87,178) rotate(-90) scale(0.5,1)" font-size="17" font-weight="bold" fill="#000">15</text>
<text transform="translate(728.62,178) rotate(-90) scale(0.5,1)" font-size="17" font-weight="bold" fill="#000">10</text>
<text transform="translate(765.37,178) rotate(-90) scale(0.5,1)" font-size="17" font-weight="bold" fill="#000">5</text>
</g>
<defs><linearGradient id="sb" x1="0" x2="1" y1="0" y2="0"><stop offset="0" stop-color="#3A78E0"/><stop offset="0.1" stop-color="#4A94E6"/><stop offset="0.18" stop-color="#3A7AE0"/><stop offset="0.3" stop-color="#2458D6"/><stop offset="0.6" stop-color="#2460DB"/><stop offset="0.9" stop-color="#2662DE"/><stop offset="1" stop-color="#1540A8"/></linearGradient><linearGradient id="tray" x1="0" x2="1" y1="0" y2="0"><stop offset="0" stop-color="#1890EC"/><stop offset="0.5" stop-color="#0F9CF0"/><stop offset="1" stop-color="#1585E0"/></linearGradient><linearGradient id="chev" x1="0" x2="0" y1="0" y2="1"><stop offset="0" stop-color="#1A6AE8"/><stop offset="1" stop-color="#6CC8F8"/></linearGradient></defs>
<rect x="775" y="163.1" width="44" height="608.3" fill="url(#sb)"/>
<rect x="775" y="163.1" width="44" height="42.5" fill="url(#tray)"/>
<rect x="775" y="205" width="44" height="1.2" fill="#2AC0F0"/>
<path d="M785.5 166.6Q792 163.8 798.5 166.6M787 168.6Q792 166.4 797 168.6M788.5 170.4Q792 169 795.5 170.4" stroke="#D0E2F4" stroke-width="0.7" fill="none"/>
<rect x="788.4" y="171.0" width="9" height="4.2" fill="#283468" stroke="#A8B4D0" stroke-width="0.6"/>
<path d="M798 171.5H803.5Q805.5 173.3 803.5 175.2H798Z" fill="#E4E8F4"/>
<rect x="785.6" y="179.6" width="9" height="4.2" fill="#283468" stroke="#A8B4D0" stroke-width="0.6"/>
<rect x="790.4" y="182.8" width="9" height="4.2" fill="#283468" stroke="#A8B4D0" stroke-width="0.6"/>
<path d="M799.7 183.4H805Q807 185.1 805 186.9H799.7Z" fill="#E4E8F4"/>
<path d="M796.5 177.6L808.5 182.6M808.5 177.6L796.5 182.6" stroke="#E82828" stroke-width="1.5"/>
<rect x="785.6" y="191.3" width="9" height="4.2" fill="#283468" stroke="#A8B4D0" stroke-width="0.6"/>
<rect x="790.4" y="194.5" width="9" height="4.2" fill="#283468" stroke="#A8B4D0" stroke-width="0.6"/>
<path d="M799.7 195.1H805Q807 196.8 805 198.6H799.7Z" fill="#E4E8F4"/>
<path d="M796.5 189.3L808.5 194.3M808.5 189.3L796.5 194.3" stroke="#E82828" stroke-width="1.5"/>
<ellipse cx="797.8" cy="206" rx="12.5" ry="6.3" fill="url(#chev)" stroke="#5A86C8" stroke-width="0.6"/>
<path d="M791.5 204.5L797.5 207.5L803.5 204.5" stroke="#fff" stroke-width="1.3" fill="none"/>
<rect x="780.8" y="635.8" width="34.7" height="103.2" rx="2" fill="#1F50C2" stroke="#1A44A8" stroke-width="0.8"/>
<text transform="translate(804.2,719.3) rotate(-90) scale(0.38,1)" font-size="16.5" fill="#fff">KOSIPRO FLEX</text>
<rect x="786.8" y="721.7" width="23.4" height="10.5" fill="#F26A1B"/>
<path d="M788.5 731.5Q797 729 803.5 722.3L804.5 723.5Q799.5 730 791 732.2Z" fill="#fff" opacity="0.9"/><rect x="805.2" y="722.8" width="4.2" height="8.4" fill="#FFE6D6" opacity="0.85"/><path d="M805.6 725H809M805.6 727H809M805.6 729H809" stroke="#F26A1B" stroke-width="0.6"/>
<path d="M785 746L787.5 743.5L790 746M785 749L787.5 746.5L790 749" stroke="#BFD4F4" stroke-width="0.7" fill="none"/>
<circle cx="797" cy="761" r="5" fill="#4CAAF4" stroke="#1E62C8" stroke-width="0.7"/><ellipse cx="796" cy="761" rx="1.4" ry="2.2" fill="#1E62C8"/><path d="M797.6 756.5V765.5" stroke="#E6F4FF" stroke-width="1"/>
<ellipse cx="797" cy="761" rx="10" ry="3.6" fill="none" stroke="#E8B030" stroke-width="1.1" transform="rotate(18 797 761)"/>
<rect x="6.6" y="781.3" width="726.6" height="69.8" fill="#fff" stroke="#111" stroke-width="1.2"/>
<rect x="6" y="850.2" width="727.8" height="1.6" fill="#000"/>
<rect x="7" y="805" width="725.5" height="1" fill="#D4D0C8"/>
<rect x="95.3" y="781.8" width="1.1" height="68.5" fill="#D4D0C8"/>
<rect x="199.6" y="781.8" width="1.1" height="68.5" fill="#D4D0C8"/>
<rect x="303.8" y="781.8" width="1.1" height="68.5" fill="#D4D0C8"/>
<rect x="407.9" y="781.8" width="1.1" height="68.5" fill="#D4D0C8"/>
<rect x="511.9" y="781.8" width="1.1" height="68.5" fill="#D4D0C8"/>
<rect x="616.3" y="781.8" width="1.1" height="68.5" fill="#D4D0C8"/>
<path d="M7.6 807.4H95.4V830H7.6Z" fill="none" stroke="#000" stroke-width="1.8"/>
<rect x="7" y="829.5" width="89.4" height="2.2" fill="#000"/>
<text x="51.15" y="798.20" font-size="10.8" text-anchor="middle" textLength="16.17" lengthAdjust="spacingAndGlyphs" >Item</text>
<text x="9.00" y="818.90" font-size="13" textLength="49.16" lengthAdjust="spacingAndGlyphs" >Description</text>
<text x="9.50" y="842.80" font-size="13" textLength="75.01" lengthAdjust="spacingAndGlyphs" >Track Zone Ratio</text>
<text x="147.95" y="798.20" font-size="10.8" text-anchor="middle" textLength="55.48" lengthAdjust="spacingAndGlyphs" >3L-7L:18L-18R</text>
<text x="98.40" y="818.90" font-size="13" textLength="92.31" lengthAdjust="spacingAndGlyphs" >Outside Track:Middle</text>
<text x="147.95" y="842.60" font-size="13" text-anchor="middle" textLength="19.13" lengthAdjust="spacingAndGlyphs" >7.19</text>
<text x="252.20" y="798.20" font-size="10.8" text-anchor="middle" textLength="60.11" lengthAdjust="spacingAndGlyphs" >8L-12L:18L-18R</text>
<text x="202.70" y="818.90" font-size="13" textLength="87.39" lengthAdjust="spacingAndGlyphs" >Middle Track:Middle</text>
<text x="252.20" y="842.60" font-size="13" text-anchor="middle" textLength="19.13" lengthAdjust="spacingAndGlyphs" >1.69</text>
<text x="356.35" y="798.20" font-size="10.8" text-anchor="middle" textLength="64.73" lengthAdjust="spacingAndGlyphs" >13L-17L:18L-18R</text>
<text x="306.90" y="818.90" font-size="13" textLength="84.67" lengthAdjust="spacingAndGlyphs" >Inside Track:Middle</text>
<text x="356.35" y="842.60" font-size="13" text-anchor="middle" textLength="5.47" lengthAdjust="spacingAndGlyphs" >1</text>
<text x="460.40" y="798.20" font-size="10.8" text-anchor="middle" textLength="67.49" lengthAdjust="spacingAndGlyphs" >18L-18R:17R-13R</text>
<text x="411.00" y="818.90" font-size="13" textLength="87.95" lengthAdjust="spacingAndGlyphs" >MIddle: Inside Track</text>
<text x="460.40" y="842.60" font-size="13" text-anchor="middle" textLength="5.47" lengthAdjust="spacingAndGlyphs" >1</text>
<text x="564.60" y="798.20" font-size="10.8" text-anchor="middle" textLength="62.87" lengthAdjust="spacingAndGlyphs" >18L-18R:12R-8R</text>
<text x="515.00" y="818.90" font-size="13" textLength="87.39" lengthAdjust="spacingAndGlyphs" >Middle:Middle Track</text>
<text x="564.60" y="842.60" font-size="13" text-anchor="middle" textLength="19.13" lengthAdjust="spacingAndGlyphs" >1.69</text>
<text x="674.90" y="798.20" font-size="10.8" text-anchor="middle" textLength="58.24" lengthAdjust="spacingAndGlyphs" >18L-18R:7R-3R</text>
<text x="619.40" y="818.90" font-size="13" textLength="92.31" lengthAdjust="spacingAndGlyphs" >Middle:Outside Track</text>
<text x="674.90" y="842.60" font-size="13" text-anchor="middle" textLength="19.13" lengthAdjust="spacingAndGlyphs" >7.19</text>
<path d="M6.7 851V1000M733 851V1000" stroke="#C8C4BC" stroke-width="1"/>
<path d="M15 1000V856Q15 852.5 17 852M725.2 1000V856Q725.2 852.5 723.2 852" stroke="#D0CCC2" stroke-width="1.2" fill="none"/>
<path d="M69.00 864.4V986.7 M85.25 864.4V986.7 M101.51 864.4V986.7 M117.77 864.4V986.7 M134.02 864.4V986.7 M150.27 864.4V986.7 M166.53 864.4V986.7 M182.78 864.4V986.7 M199.04 864.4V986.7 M215.29 864.4V986.7 M231.55 864.4V986.7 M247.80 864.4V986.7 M264.06 864.4V986.7 M280.31 864.4V986.7 M296.57 864.4V986.7 M312.82 864.4V986.7 M329.08 864.4V986.7 M345.33 864.4V986.7 M361.59 864.4V986.7 M377.84 864.4V986.7 M394.10 864.4V986.7 M410.35 864.4V986.7 M426.61 864.4V986.7 M442.86 864.4V986.7 M459.12 864.4V986.7 M475.38 864.4V986.7 M491.63 864.4V986.7 M507.88 864.4V986.7 M524.14 864.4V986.7 M540.39 864.4V986.7 M556.65 864.4V986.7 M572.90 864.4V986.7 M589.16 864.4V986.7 M605.41 864.4V986.7 M621.67 864.4V986.7 M637.92 864.4V986.7 M654.18 864.4V986.7 M670.43 864.4V986.7 M686.69 864.4V986.7" stroke="#C8C8C8" stroke-width="0.8" stroke-dasharray="2.5 2" fill="none"/>
<path d="M52.5 974.47H711.7 M52.5 962.24H711.7 M52.5 950.01H711.7 M52.5 937.78H711.7 M52.5 925.55H711.7 M52.5 913.32H711.7 M52.5 901.09H711.7 M52.5 888.86H711.7 M52.5 876.63H711.7" stroke="#222" stroke-width="1.1" stroke-dasharray="1.7 1.15" fill="none"/>
<path d="M52.5 864.4H711.7V990.7" stroke="#555" stroke-width="1.4" fill="none"/>
<path d="M52.5 863.6999999999999V991.7M51.5 986.7H712.4000000000001" stroke="#6E6A5E" stroke-width="1.6" fill="none"/>
<path d="M47 986.70H52.5 M47 974.47H52.5 M47 962.24H52.5 M47 950.01H52.5 M47 937.78H52.5 M47 925.55H52.5 M47 913.32H52.5 M47 901.09H52.5 M47 888.86H52.5 M47 876.63H52.5 M47 864.40H52.5 M69.00 986.7V991.7 M85.25 986.7V991.7 M101.51 986.7V991.7 M117.77 986.7V991.7 M134.02 986.7V991.7 M150.27 986.7V991.7 M166.53 986.7V991.7 M182.78 986.7V991.7 M199.04 986.7V991.7 M215.29 986.7V991.7 M231.55 986.7V991.7 M247.80 986.7V991.7 M264.06 986.7V991.7 M280.31 986.7V991.7 M296.57 986.7V991.7 M312.82 986.7V991.7 M329.08 986.7V991.7 M345.33 986.7V991.7 M361.59 986.7V991.7 M377.84 986.7V991.7 M394.10 986.7V991.7 M410.35 986.7V991.7 M426.61 986.7V991.7 M442.86 986.7V991.7 M459.12 986.7V991.7 M475.38 986.7V991.7 M491.63 986.7V991.7 M507.88 986.7V991.7 M524.14 986.7V991.7 M540.39 986.7V991.7 M556.65 986.7V991.7 M572.90 986.7V991.7 M589.16 986.7V991.7 M605.41 986.7V991.7 M621.67 986.7V991.7 M637.92 986.7V991.7 M654.18 986.7V991.7 M670.43 986.7V991.7 M686.69 986.7V991.7" stroke="#6E6A5E" stroke-width="1.4" fill="none"/>
<text x="45.00" y="988.50" font-size="7.2" text-anchor="end" font-weight="bold" fill="#555" textLength="3.60" lengthAdjust="spacingAndGlyphs" >0</text>
<text x="45.00" y="976.27" font-size="7.2" text-anchor="end" font-weight="bold" fill="#555" textLength="10.80" lengthAdjust="spacingAndGlyphs" >150</text>
<text x="45.00" y="964.04" font-size="7.2" text-anchor="end" font-weight="bold" fill="#555" textLength="10.80" lengthAdjust="spacingAndGlyphs" >300</text>
<text x="45.00" y="951.81" font-size="7.2" text-anchor="end" font-weight="bold" fill="#555" textLength="10.80" lengthAdjust="spacingAndGlyphs" >450</text>
<text x="45.00" y="939.58" font-size="7.2" text-anchor="end" font-weight="bold" fill="#555" textLength="10.80" lengthAdjust="spacingAndGlyphs" >600</text>
<text x="45.00" y="927.35" font-size="7.2" text-anchor="end" font-weight="bold" fill="#555" textLength="10.80" lengthAdjust="spacingAndGlyphs" >750</text>
<text x="45.00" y="915.12" font-size="7.2" text-anchor="end" font-weight="bold" fill="#555" textLength="10.80" lengthAdjust="spacingAndGlyphs" >900</text>
<text x="45.00" y="902.89" font-size="7.2" text-anchor="end" font-weight="bold" fill="#555" textLength="14.40" lengthAdjust="spacingAndGlyphs" >1050</text>
<text x="45.00" y="890.66" font-size="7.2" text-anchor="end" font-weight="bold" fill="#555" textLength="14.40" lengthAdjust="spacingAndGlyphs" >1200</text>
<text x="45.00" y="878.43" font-size="7.2" text-anchor="end" font-weight="bold" fill="#555" textLength="14.40" lengthAdjust="spacingAndGlyphs" >1350</text>
<text x="45.00" y="866.20" font-size="7.2" text-anchor="end" font-weight="bold" fill="#555" textLength="14.40" lengthAdjust="spacingAndGlyphs" >1500</text>
<path d="M53 986.4H57.5" stroke="#333" stroke-width="1.2"/>
<text x="69.00" y="1000.80" font-size="7.2" text-anchor="middle" font-weight="bold" fill="#555" >1</text>
<path d="M65.00 986.2H73.00" stroke="#333" stroke-width="1"/>
<text x="85.25" y="1000.80" font-size="7.2" text-anchor="middle" font-weight="bold" fill="#555" >2</text>
<rect x="81.55" y="980.18" width="7.4" height="6.52" fill="#00CCCC"/>
<rect x="81.55" y="980.18" width="7.4" height="6.52" fill="none" stroke="#111" stroke-width="1"/>
<text x="101.51" y="1000.80" font-size="7.2" text-anchor="middle" font-weight="bold" fill="#555" >3</text>
<rect x="97.81" y="980.18" width="7.4" height="6.52" fill="#00CCCC"/>
<rect x="97.81" y="980.18" width="7.4" height="6.52" fill="none" stroke="#111" stroke-width="1"/>
<text x="117.77" y="1000.80" font-size="7.2" text-anchor="middle" font-weight="bold" fill="#555" >4</text>
<rect x="114.06" y="980.18" width="7.4" height="6.52" fill="#00CCCC"/>
<rect x="114.06" y="980.18" width="7.4" height="6.52" fill="none" stroke="#111" stroke-width="1"/>
<text x="134.02" y="1000.80" font-size="7.2" text-anchor="middle" font-weight="bold" fill="#555" >5</text>
<rect x="130.32" y="980.18" width="7.4" height="6.52" fill="#00CCCC"/>
<rect x="130.32" y="980.18" width="7.4" height="6.52" fill="none" stroke="#111" stroke-width="1"/>
<text x="150.27" y="1000.80" font-size="7.2" text-anchor="middle" font-weight="bold" fill="#555" >6</text>
<rect x="146.57" y="970.39" width="7.4" height="16.31" fill="#00CCCC"/>
<rect x="146.57" y="969.74" width="7.4" height="0.65" fill="#0000FF"/>
<rect x="146.57" y="969.74" width="7.4" height="16.96" fill="none" stroke="#111" stroke-width="1"/>
<text x="166.53" y="1000.80" font-size="7.2" text-anchor="middle" font-weight="bold" fill="#555" >7</text>
<rect x="162.83" y="970.39" width="7.4" height="16.31" fill="#00CCCC"/>
<rect x="162.83" y="969.74" width="7.4" height="0.65" fill="#0000FF"/>
<rect x="162.83" y="969.74" width="7.4" height="16.96" fill="none" stroke="#111" stroke-width="1"/>
<text x="182.78" y="1000.80" font-size="7.2" text-anchor="middle" font-weight="bold" fill="#555" >8</text>
<rect x="179.09" y="970.39" width="7.4" height="16.31" fill="#00CCCC"/>
<rect x="179.09" y="967.13" width="7.4" height="3.26" fill="#0000FF"/>
<rect x="179.09" y="967.13" width="7.4" height="19.57" fill="none" stroke="#111" stroke-width="1"/>
<text x="199.04" y="1000.80" font-size="7.2" text-anchor="middle" font-weight="bold" fill="#555" >9</text>
<rect x="195.34" y="963.87" width="7.4" height="22.83" fill="#00CCCC"/>
<rect x="195.34" y="950.83" width="7.4" height="13.05" fill="#0000FF"/>
<rect x="195.34" y="950.83" width="7.4" height="35.87" fill="none" stroke="#111" stroke-width="1"/>
<text x="215.29" y="1000.80" font-size="7.2" text-anchor="middle" font-weight="bold" fill="#555" >10</text>
<rect x="211.59" y="963.87" width="7.4" height="22.83" fill="#00CCCC"/>
<rect x="211.59" y="944.30" width="7.4" height="19.57" fill="#0000FF"/>
<rect x="211.59" y="944.30" width="7.4" height="42.40" fill="none" stroke="#111" stroke-width="1"/>
<text x="231.55" y="1000.80" font-size="7.2" text-anchor="middle" font-weight="bold" fill="#555" >11</text>
<rect x="227.85" y="963.87" width="7.4" height="22.83" fill="#00CCCC"/>
<rect x="227.85" y="937.78" width="7.4" height="26.09" fill="#0000FF"/>
<rect x="227.85" y="937.78" width="7.4" height="48.92" fill="none" stroke="#111" stroke-width="1"/>
<text x="247.80" y="1000.80" font-size="7.2" text-anchor="middle" font-weight="bold" fill="#555" >12</text>
<rect x="244.10" y="941.04" width="7.4" height="45.66" fill="#00CCCC"/>
<rect x="244.10" y="911.69" width="7.4" height="29.35" fill="#0000FF"/>
<rect x="244.10" y="911.69" width="7.4" height="75.01" fill="none" stroke="#111" stroke-width="1"/>
<text x="264.06" y="1000.80" font-size="7.2" text-anchor="middle" font-weight="bold" fill="#555" >13</text>
<rect x="260.36" y="941.04" width="7.4" height="45.66" fill="#00CCCC"/>
<rect x="260.36" y="911.69" width="7.4" height="29.35" fill="#0000FF"/>
<rect x="260.36" y="911.69" width="7.4" height="75.01" fill="none" stroke="#111" stroke-width="1"/>
<text x="280.31" y="1000.80" font-size="7.2" text-anchor="middle" font-weight="bold" fill="#555" >14</text>
<rect x="276.62" y="941.04" width="7.4" height="45.66" fill="#00CCCC"/>
<rect x="276.62" y="911.69" width="7.4" height="29.35" fill="#0000FF"/>
<rect x="276.62" y="911.69" width="7.4" height="75.01" fill="none" stroke="#111" stroke-width="1"/>
<text x="296.57" y="1000.80" font-size="7.2" text-anchor="middle" font-weight="bold" fill="#555" >15</text>
<rect x="292.87" y="941.04" width="7.4" height="45.66" fill="#00CCCC"/>
<rect x="292.87" y="911.69" width="7.4" height="29.35" fill="#0000FF"/>
<rect x="292.87" y="911.69" width="7.4" height="75.01" fill="none" stroke="#111" stroke-width="1"/>
<text x="312.82" y="1000.80" font-size="7.2" text-anchor="middle" font-weight="bold" fill="#555" >16</text>
<rect x="309.12" y="941.04" width="7.4" height="45.66" fill="#00CCCC"/>
<rect x="309.12" y="911.69" width="7.4" height="29.35" fill="#0000FF"/>
<rect x="309.12" y="911.69" width="7.4" height="75.01" fill="none" stroke="#111" stroke-width="1"/>
<text x="329.08" y="1000.80" font-size="7.2" text-anchor="middle" font-weight="bold" fill="#555" >17</text>
<rect x="325.38" y="941.04" width="7.4" height="45.66" fill="#00CCCC"/>
<rect x="325.38" y="911.69" width="7.4" height="29.35" fill="#0000FF"/>
<rect x="325.38" y="911.69" width="7.4" height="75.01" fill="none" stroke="#111" stroke-width="1"/>
<text x="345.33" y="1000.80" font-size="7.2" text-anchor="middle" font-weight="bold" fill="#555" >18</text>
<rect x="341.63" y="941.04" width="7.4" height="45.66" fill="#00CCCC"/>
<rect x="341.63" y="911.69" width="7.4" height="29.35" fill="#0000FF"/>
<rect x="341.63" y="911.69" width="7.4" height="75.01" fill="none" stroke="#111" stroke-width="1"/>
<text x="361.59" y="1000.80" font-size="7.2" text-anchor="middle" font-weight="bold" fill="#555" >19</text>
<rect x="357.89" y="941.04" width="7.4" height="45.66" fill="#00CCCC"/>
<rect x="357.89" y="911.69" width="7.4" height="29.35" fill="#0000FF"/>
<rect x="357.89" y="911.69" width="7.4" height="75.01" fill="none" stroke="#111" stroke-width="1"/>
<text x="377.84" y="1000.80" font-size="7.2" text-anchor="middle" font-weight="bold" fill="#555" >20</text>
<rect x="374.14" y="941.04" width="7.4" height="45.66" fill="#00CCCC"/>
<rect x="374.14" y="911.69" width="7.4" height="29.35" fill="#0000FF"/>
<rect x="374.14" y="911.69" width="7.4" height="75.01" fill="none" stroke="#111" stroke-width="1"/>
<text x="394.10" y="1000.80" font-size="7.2" text-anchor="middle" font-weight="bold" fill="#555" >19</text>
<rect x="390.40" y="941.04" width="7.4" height="45.66" fill="#00CCCC"/>
<rect x="390.40" y="911.69" width="7.4" height="29.35" fill="#0000FF"/>
<rect x="390.40" y="911.69" width="7.4" height="75.01" fill="none" stroke="#111" stroke-width="1"/>
<text x="410.35" y="1000.80" font-size="7.2" text-anchor="middle" font-weight="bold" fill="#555" >18</text>
<rect x="406.65" y="941.04" width="7.4" height="45.66" fill="#00CCCC"/>
<rect x="406.65" y="911.69" width="7.4" height="29.35" fill="#0000FF"/>
<rect x="406.65" y="911.69" width="7.4" height="75.01" fill="none" stroke="#111" stroke-width="1"/>
<text x="426.61" y="1000.80" font-size="7.2" text-anchor="middle" font-weight="bold" fill="#555" >17</text>
<rect x="422.91" y="941.04" width="7.4" height="45.66" fill="#00CCCC"/>
<rect x="422.91" y="911.69" width="7.4" height="29.35" fill="#0000FF"/>
<rect x="422.91" y="911.69" width="7.4" height="75.01" fill="none" stroke="#111" stroke-width="1"/>
<text x="442.86" y="1000.80" font-size="7.2" text-anchor="middle" font-weight="bold" fill="#555" >16</text>
<rect x="439.16" y="941.04" width="7.4" height="45.66" fill="#00CCCC"/>
<rect x="439.16" y="911.69" width="7.4" height="29.35" fill="#0000FF"/>
<rect x="439.16" y="911.69" width="7.4" height="75.01" fill="none" stroke="#111" stroke-width="1"/>
<text x="459.12" y="1000.80" font-size="7.2" text-anchor="middle" font-weight="bold" fill="#555" >15</text>
<rect x="455.42" y="941.04" width="7.4" height="45.66" fill="#00CCCC"/>
<rect x="455.42" y="911.69" width="7.4" height="29.35" fill="#0000FF"/>
<rect x="455.42" y="911.69" width="7.4" height="75.01" fill="none" stroke="#111" stroke-width="1"/>
<text x="475.38" y="1000.80" font-size="7.2" text-anchor="middle" font-weight="bold" fill="#555" >14</text>
<rect x="471.68" y="941.04" width="7.4" height="45.66" fill="#00CCCC"/>
<rect x="471.68" y="911.69" width="7.4" height="29.35" fill="#0000FF"/>
<rect x="471.68" y="911.69" width="7.4" height="75.01" fill="none" stroke="#111" stroke-width="1"/>
<text x="491.63" y="1000.80" font-size="7.2" text-anchor="middle" font-weight="bold" fill="#555" >13</text>
<rect x="487.93" y="941.04" width="7.4" height="45.66" fill="#00CCCC"/>
<rect x="487.93" y="911.69" width="7.4" height="29.35" fill="#0000FF"/>
<rect x="487.93" y="911.69" width="7.4" height="75.01" fill="none" stroke="#111" stroke-width="1"/>
<text x="507.88" y="1000.80" font-size="7.2" text-anchor="middle" font-weight="bold" fill="#555" >12</text>
<rect x="504.19" y="941.04" width="7.4" height="45.66" fill="#00CCCC"/>
<rect x="504.19" y="911.69" width="7.4" height="29.35" fill="#0000FF"/>
<rect x="504.19" y="911.69" width="7.4" height="75.01" fill="none" stroke="#111" stroke-width="1"/>
<text x="524.14" y="1000.80" font-size="7.2" text-anchor="middle" font-weight="bold" fill="#555" >11</text>
<rect x="520.44" y="963.87" width="7.4" height="22.83" fill="#00CCCC"/>
<rect x="520.44" y="937.78" width="7.4" height="26.09" fill="#0000FF"/>
<rect x="520.44" y="937.78" width="7.4" height="48.92" fill="none" stroke="#111" stroke-width="1"/>
<text x="540.39" y="1000.80" font-size="7.2" text-anchor="middle" font-weight="bold" fill="#555" >10</text>
<rect x="536.69" y="963.87" width="7.4" height="22.83" fill="#00CCCC"/>
<rect x="536.69" y="944.30" width="7.4" height="19.57" fill="#0000FF"/>
<rect x="536.69" y="944.30" width="7.4" height="42.40" fill="none" stroke="#111" stroke-width="1"/>
<text x="556.65" y="1000.80" font-size="7.2" text-anchor="middle" font-weight="bold" fill="#555" >9</text>
<rect x="552.95" y="963.87" width="7.4" height="22.83" fill="#00CCCC"/>
<rect x="552.95" y="950.83" width="7.4" height="13.05" fill="#0000FF"/>
<rect x="552.95" y="950.83" width="7.4" height="35.87" fill="none" stroke="#111" stroke-width="1"/>
<text x="572.90" y="1000.80" font-size="7.2" text-anchor="middle" font-weight="bold" fill="#555" >8</text>
<rect x="569.20" y="970.39" width="7.4" height="16.31" fill="#00CCCC"/>
<rect x="569.20" y="967.13" width="7.4" height="3.26" fill="#0000FF"/>
<rect x="569.20" y="967.13" width="7.4" height="19.57" fill="none" stroke="#111" stroke-width="1"/>
<text x="589.16" y="1000.80" font-size="7.2" text-anchor="middle" font-weight="bold" fill="#555" >7</text>
<rect x="585.46" y="970.39" width="7.4" height="16.31" fill="#00CCCC"/>
<rect x="585.46" y="969.74" width="7.4" height="0.65" fill="#0000FF"/>
<rect x="585.46" y="969.74" width="7.4" height="16.96" fill="none" stroke="#111" stroke-width="1"/>
<text x="605.41" y="1000.80" font-size="7.2" text-anchor="middle" font-weight="bold" fill="#555" >6</text>
<rect x="601.71" y="970.39" width="7.4" height="16.31" fill="#00CCCC"/>
<rect x="601.71" y="969.74" width="7.4" height="0.65" fill="#0000FF"/>
<rect x="601.71" y="969.74" width="7.4" height="16.96" fill="none" stroke="#111" stroke-width="1"/>
<text x="621.67" y="1000.80" font-size="7.2" text-anchor="middle" font-weight="bold" fill="#555" >5</text>
<rect x="617.97" y="980.18" width="7.4" height="6.52" fill="#00CCCC"/>
<rect x="617.97" y="980.18" width="7.4" height="6.52" fill="none" stroke="#111" stroke-width="1"/>
<text x="637.92" y="1000.80" font-size="7.2" text-anchor="middle" font-weight="bold" fill="#555" >4</text>
<rect x="634.22" y="980.18" width="7.4" height="6.52" fill="#00CCCC"/>
<rect x="634.22" y="980.18" width="7.4" height="6.52" fill="none" stroke="#111" stroke-width="1"/>
<text x="654.18" y="1000.80" font-size="7.2" text-anchor="middle" font-weight="bold" fill="#555" >3</text>
<rect x="650.48" y="980.18" width="7.4" height="6.52" fill="#00CCCC"/>
<rect x="650.48" y="980.18" width="7.4" height="6.52" fill="none" stroke="#111" stroke-width="1"/>
<text x="670.43" y="1000.80" font-size="7.2" text-anchor="middle" font-weight="bold" fill="#555" >2</text>
<rect x="666.73" y="980.18" width="7.4" height="6.52" fill="#00CCCC"/>
<rect x="666.73" y="980.18" width="7.4" height="6.52" fill="none" stroke="#111" stroke-width="1"/>
<text x="686.69" y="1000.80" font-size="7.2" text-anchor="middle" font-weight="bold" fill="#555" >1</text>
<path d="M682.69 986.2H690.69" stroke="#333" stroke-width="1"/>
<defs><linearGradient id="tb" x1="0" x2="0" y1="0" y2="1"><stop offset="0" stop-color="#3A7AE6"/><stop offset="0.05" stop-color="#4A90EA"/><stop offset="0.14" stop-color="#2E66DA"/><stop offset="0.3" stop-color="#2356D2"/><stop offset="0.6" stop-color="#245ADA"/><stop offset="0.9" stop-color="#265EDC"/><stop offset="1" stop-color="#1A48B8"/></linearGradient><linearGradient id="tbt" x1="0" x2="0" y1="0" y2="1"><stop offset="0" stop-color="#1890EC"/><stop offset="0.5" stop-color="#0F9CF0"/><stop offset="1" stop-color="#1585E0"/></linearGradient></defs>
<rect x="6.2" y="998.8" width="727.3" height="26.1" fill="url(#tb)"/>
<rect x="682.6" y="998.8" width="51" height="26.1" fill="url(#tbt)"/>
<rect x="682.2" y="998.8" width="1" height="26.1" fill="#2AC0F0"/>
<rect x="45.7" y="1002.6" width="122.5" height="19.8" rx="2" fill="#1F50C2" stroke="#1A44A8" stroke-width="0.8"/>
<rect x="53.6" y="1005" width="12.4" height="14" fill="#F26A1B"/>
<path d="M54.5 1008Q58 1013 62 1017L60.5 1018.5Q56.5 1014 54 1009Z" fill="#fff" opacity="0.9"/><rect x="56" y="1014.5" width="9" height="3.8" fill="#FFE6D6" opacity="0.85"/><path d="M58 1014.8V1018M60.5 1014.8V1018M63 1014.8V1018" stroke="#F26A1B" stroke-width="0.6"/>
<text x="68.50" y="1016.20" font-size="10.4" fill="#fff" textLength="55.50" lengthAdjust="spacingAndGlyphs" >KOSIPRO FLEX</text>
<circle cx="19.5" cy="1012.5" r="6" fill="#4CAAF4" stroke="#1E62C8" stroke-width="0.7"/><ellipse cx="20" cy="1011.2" rx="2.6" ry="1.6" fill="#1E62C8"/><path d="M14.5 1013.2H24.5" stroke="#E6F4FF" stroke-width="1.1"/><path d="M21.5 1015.5L26 1016" stroke="#2762D8" stroke-width="2.2"/>
<ellipse cx="18.8" cy="1012.5" rx="8" ry="3.5" fill="none" stroke="#E8B030" stroke-width="1.2" transform="rotate(-50 18.8 1012.5)"/>
<path d="M34 1004L36.5 1006.5L34 1009M37 1004L39.5 1006.5L37 1009" stroke="#BFD4F4" stroke-width="0.7" fill="none"/>
<defs><radialGradient id="cb" cx="0.35" cy="0.3" r="0.8"><stop offset="0" stop-color="#8AD0FA"/><stop offset="1" stop-color="#1E6EE0"/></radialGradient></defs>
<circle cx="682.6" cy="1012.1" r="6.6" fill="url(#cb)" stroke="#2C5CB0" stroke-width="0.6"/>
<path d="M684.2 1008.8L681 1012.1L684.2 1015.4" stroke="#fff" stroke-width="1.5" fill="none"/>
<rect x="695.0" y="1005.2" width="5.6" height="5.6" fill="#283468" stroke="#8A98C0" stroke-width="0.5"/>
<rect x="691.4" y="1008" width="5" height="6.2" fill="#283468" stroke="#8A98C0" stroke-width="0.5"/>
<rect x="691.0" y="1014.8" width="5" height="1.8" fill="#E4E8F4"/>
<path d="M696.3 1011.5L702.6 1018.3M702.6 1011.5L696.3 1018.3" stroke="#E82828" stroke-width="1.5"/>
<rect x="708.6" y="1005.2" width="5.6" height="5.6" fill="#283468" stroke="#8A98C0" stroke-width="0.5"/>
<rect x="705.0" y="1008" width="5" height="6.2" fill="#283468" stroke="#8A98C0" stroke-width="0.5"/>
<rect x="704.6" y="1014.8" width="5" height="1.8" fill="#E4E8F4"/>
<path d="M709.9 1011.5L716.2 1018.3M716.2 1011.5L709.9 1018.3" stroke="#E82828" stroke-width="1.5"/>
<rect x="719" y="1007.5" width="5.6" height="5.5" fill="#283468" stroke="#8A98C0" stroke-width="0.5"/>
<rect x="719" y="1014" width="5.6" height="1.8" fill="#E4E8F4"/>
<path d="M726 1006Q727.8 1009.5 726 1013M728.3 1005Q730.6 1009.5 728.3 1014M730.6 1004.5Q733.2 1009.5 730.6 1014.5" stroke="#D0E2F4" stroke-width="0.7" fill="none"/>
</svg></body></html>
